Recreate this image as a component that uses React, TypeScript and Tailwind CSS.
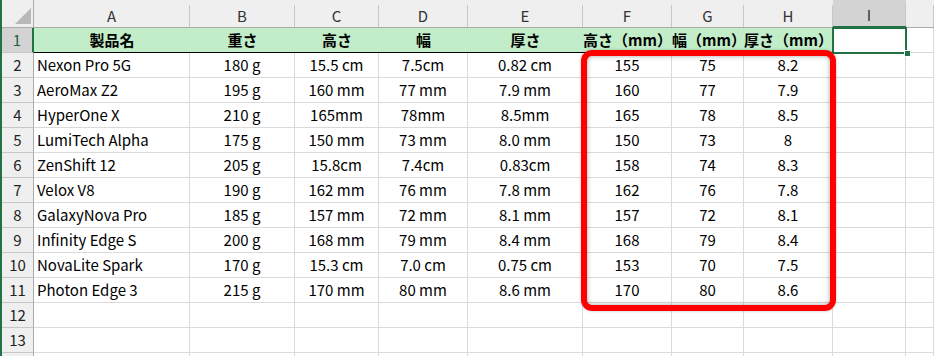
import React from "react";

const COLS = ["A", "B", "C", "D", "E", "F", "G", "H", "I", ""];

const HEADERS = ["製品名", "重さ", "高さ", "幅", "厚さ", "高さ（mm）", "幅（mm）", "厚さ（mm）"];

const ROWS: string[][] = [
  ["Nexon Pro 5G", "180 g", "15.5 cm", "7.5cm", "0.82 cm", "155", "75", "8.2"],
  ["AeroMax Z2", "195 g", "160 mm", "77 mm", "7.9 mm", "160", "77", "7.9"],
  ["HyperOne X", "210 g", "165mm", "78mm", "8.5mm", "165", "78", "8.5"],
  ["LumiTech Alpha", "175 g", "150 mm", "73 mm", "8.0 mm", "150", "73", "8"],
  ["ZenShift 12", "205 g", "15.8cm", "7.4cm", "0.83cm", "158", "74", "8.3"],
  ["Velox V8", "190 g", "162 mm", "76 mm", "7.8 mm", "162", "76", "7.8"],
  ["GalaxyNova Pro", "185 g", "157 mm", "72 mm", "8.1 mm", "157", "72", "8.1"],
  ["Infinity Edge S", "200 g", "168 mm", "79 mm", "8.4 mm", "168", "79", "8.4"],
  ["NovaLite Spark", "170 g", "15.3 cm", "7.0 cm", "0.75 cm", "153", "70", "7.5"],
  ["Photon Edge 3", "215 g", "170 mm", "80 mm", "8.6 mm", "170", "80", "8.6"],
];

const GRID =
  "grid grid-cols-[32px_156px_105px_84px_89px_115px_89px_72px_89px_73px_1fr]";

function RowHeader({ n, active }: { n?: number; active?: boolean }) {
  return (
    <div
      className={
        active
          ? "h-[25px] bg-[#d3d3d3] border-b border-[#c6c6c6] border-r-2 border-r-[#217346] flex items-center justify-center text-[#1f5e3b]"
          : "h-[25px] bg-[#efefef] border-b border-[#c6c6c6] border-r border-r-[#ababab] flex items-center justify-center text-[#222]"
      }
    >
      {n}
    </div>
  );
}

export default function App() {
  return (
    <div className="relative w-[934px] h-[356px] overflow-hidden bg-white border-l-2 border-[#217346] text-[15px] text-black font-['Noto_Sans_CJK_JP','Noto_Sans',sans-serif]">
      {/* column headers */}
      <div className={GRID}>
        <div className="h-7 bg-[#efefef] border-b border-r border-[#ababab] relative">
          <div className="absolute left-[13px] top-[8px] w-0 h-0 border-l-[16px] border-l-transparent border-b-[16px] border-b-[#b8b8b8]" />
        </div>
        {COLS.map((c, i) => (
          <div
            key={i}
            className={
              c === "I"
                ? "h-7 bg-[#d3d3d3] border-b-2 border-[#217346] pt-[5px]"
                : "h-7 bg-[#efefef] border-b border-[#ababab] pt-[5px]"
            }
          >
            <div className="h-full border-r border-[#c8c8c8] flex items-center justify-center text-[#333] leading-none pb-[2px]">
              {c}
            </div>
          </div>
        ))}
      </div>

      {/* row 1: field names */}
      <div className={GRID}>
        <RowHeader n={1} active />
        {HEADERS.map((h, i) => (
          <div
            key={i}
            className="h-[25px] bg-[#c2edc9] border-b border-black flex items-center justify-center font-bold"
          >
            {h}
          </div>
        ))}
        <div className="h-[25px] border-b border-r border-[#dadada]" />
        <div className="h-[25px] border-b border-r border-[#dadada]" />
      </div>

      {/* data rows */}
      {ROWS.map((r, ri) => (
        <div key={ri} className={GRID}>
          <RowHeader n={ri + 2} />
          {r.map((v, ci) => (
            <div
              key={ci}
              className={
                ci === 0
                  ? "h-[25px] border-b border-r border-[#dadada] flex items-center pl-[3px] whitespace-nowrap"
                  : "h-[25px] border-b border-r border-[#dadada] flex items-center justify-center whitespace-nowrap"
              }
            >
              {v}
            </div>
          ))}
          <div className="h-[25px] border-b border-r border-[#dadada]" />
          <div className="h-[25px] border-b border-r border-[#dadada]" />
        </div>
      ))}

      {/* empty rows; the last one is only partly in view */}
      {[12, 13, undefined].map((n, k) => (
        <div key={k} className={GRID}>
          <RowHeader n={n} />
          {COLS.map((_, i) => (
            <div key={i} className="h-[25px] border-b border-r border-[#dadada]" />
          ))}
        </div>
      ))}

      {/* selected cell I1 */}
      <div className="absolute left-[830px] top-[27px] w-[75px] h-[27px] border-2 border-[#217346]" />
      <div className="absolute left-[902px] top-[50px] w-[7px] h-[7px] bg-[#217346] border border-white" />

      {/* red highlight */}
      <div className="absolute left-[579px] top-[50px] w-[255px] h-[261px] rounded-[11px] border-[6px] border-[#ff0000] shadow-[inset_0_0_5px_rgba(0,0,0,0.35),0_0_3px_rgba(0,0,0,0.25)]" />
    </div>
  );
}
